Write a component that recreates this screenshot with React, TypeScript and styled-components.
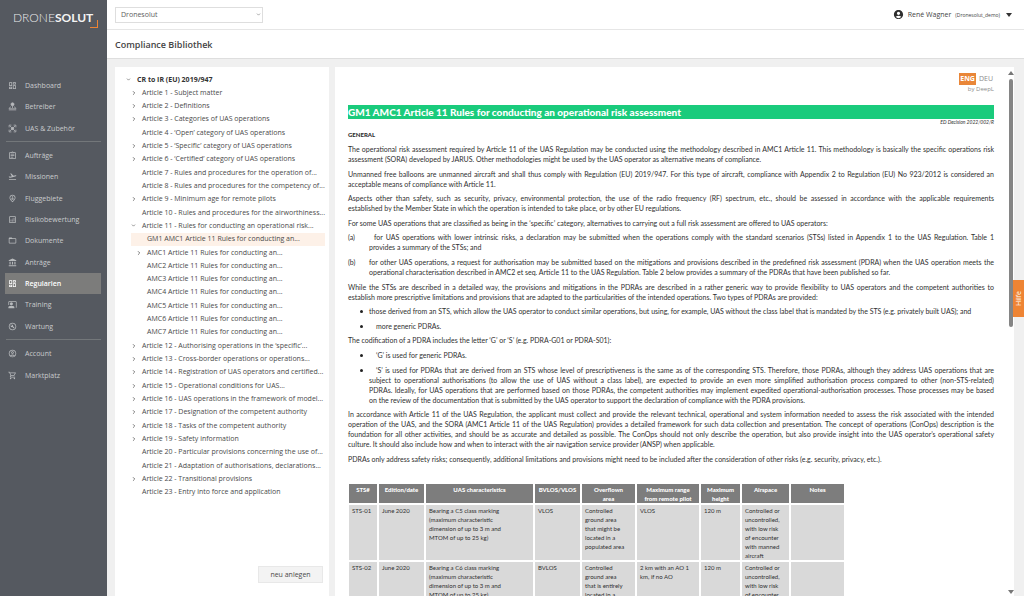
import React from "react";
import styled, { createGlobalStyle } from "styled-components";
import {
  MdOutlineDashboard,
  MdOutlineAssignment,
  MdFlightTakeoff,
  MdOutlinePersonPinCircle,
  MdOutlineAnalytics,
  MdFolderOpen,
  MdAccountBalance,
  MdCoPresent,
  MdOutlineBuildCircle,
  MdOutlineAccountCircle,
  MdAccountCircle,
  MdOutlineShoppingCart,
} from "react-icons/md";
import { ChevronDown, ChevronRight } from "lucide-react";

const Global = createGlobalStyle`
  *, *::before, *::after { box-sizing: border-box; }
  body { margin: 0; background: #f0f0f0; font-family: "Open Sans", "Noto Sans", sans-serif; }
  button, select { font: inherit; color: inherit; }
`;

const Shell = styled.div`
  display: grid;
  grid-template-columns: 107px minmax(0, 1fr);
  height: 100vh;
  overflow: hidden;
  position: relative;
`;

const Sidebar = styled.aside`
  background: #555960;
  color: #d3d5d7;
  padding: 11px 5px 0;
`;

const Logo = styled.a`
  display: flex;
  align-items: flex-start;
  height: 64px;
  padding-left: 8px;
  color: #e9eaeb;
  text-decoration: none;
  font-family: Lato, "Open Sans", sans-serif;
  font-size: 12px;
  line-height: 14px;
  font-weight: 300;
  b { font-weight: 700; color: #f4f4f4; }
`;

const LogoCorner = styled.span`
  flex: none;
  width: 8px;
  height: 8px;
  margin: 9px 0 0 -3px;
  border-right: 1px solid #ee8434;
  border-bottom: 1px solid #ee8434;
`;

const NavGroup = styled.ul<{ $height: number }>`
  display: grid;
  grid-auto-rows: 1fr;
  min-height: ${(p) => p.$height}px;
  margin: 0;
  padding: 0;
  list-style: none;
`;

const NavLink = styled.a<{ $active?: boolean }>`
  display: grid;
  grid-template-columns: 17px 1fr;
  align-items: center;
  height: 100%;
  padding-left: 3px;
  color: ${(p) => (p.$active ? "#ffffff" : "#c9cbcd")};
  background: ${(p) => (p.$active ? "#7c7c7b" : "transparent")};
  font-size: 7px;
  font-weight: ${(p) => (p.$active ? 600 : 500)};
  text-decoration: none;
  margin-right: 1px;
  svg { width: 9px; height: 9px; opacity: ${(p) => (p.$active ? 1 : 0.85)}; }
`;

const Rule = styled.hr`
  height: 1px;
  margin: 2px 1px 3px;
  border: 0;
  background: #73777a;
`;

const Main = styled.main`
  display: flex;
  flex-direction: column;
  min-width: 0;
  min-height: 0;
`;

const TopBar = styled.header`
  display: flex;
  align-items: center;
  justify-content: space-between;
  height: 30px;
  flex: none;
  padding: 0 12px 0 8px;
  background: #fff;
  border-bottom: 1px solid #e6e6e6;
`;

const SelectWrap = styled.label`
  display: flex;
  align-items: center;
  width: 148px;
  height: 16px;
  padding-right: 1px;
  border: 1px solid #dedede;
  color: #777;
`;

const CompanySelect = styled.select`
  flex: 1;
  height: 14px;
  padding: 0 5px;
  border: 0;
  outline: 0;
  appearance: none;
  background: transparent;
  color: #5c5c5c;
  font-size: 7px;
`;

const UserMenu = styled.button`
  display: flex;
  align-items: center;
  gap: 4px;
  padding: 0;
  border: 0;
  background: none;
  color: #444;
  font-size: 7px;
  svg { color: #2e2e2e; }
  small { font-size: 5px; }
`;

const Caret = styled.span`
  margin-left: 2px;
  border: 3px solid transparent;
  border-top: 4px solid #333;
  border-bottom: 0;
`;

const TitleBar = styled.div`
  display: flex;
  align-items: center;
  flex: none;
  height: 29px;
  padding: 0 8px;
  background: #fff;
  border-bottom: 1px solid #dedede;
`;

const Title = styled.h1`
  margin: 0;
  color: #444;
  font-size: 9px;
  font-weight: 600;
`;

const Panels = styled.div`
  display: grid;
  grid-template-columns: 214px minmax(0, 1fr);
  gap: 6px;
  flex: 1;
  min-height: 0;
  padding: 8px 10px 0 8px;
`;

const TreePanel = styled.section`
  display: flex;
  flex-direction: column;
  min-height: 0;
  padding: 5px 6px 13px 11px;
  background: #fff;
`;

const TreeRoot = styled.button`
  display: grid;
  grid-template-columns: 11px 1fr;
  align-items: center;
  height: 14px;
  flex: none;
  padding: 0;
  border: 0;
  background: none;
  color: #333;
  font-size: 7px;
  font-weight: 700;
  text-align: left;
  svg { color: #555; }
`;

const TreeList = styled.ul`
  display: grid;
  grid-auto-rows: 1fr;
  min-height: 413px;
  margin: 0 0 0 5px;
  padding: 0;
  list-style: none;
`;

const TreeItem = styled.button<{ $nested?: boolean; $active?: boolean }>`
  display: grid;
  grid-template-columns: 11px 1fr;
  align-items: center;
  width: 100%;
  height: 100%;
  padding: 0 0 0 ${(p) => (p.$nested ? 5 : 0)}px;
  border: 0;
  background: ${(p) => (p.$active ? "#fdf1e8" : "transparent")};
  color: #4a4a4a;
  font-size: 7px;
  line-height: 10px;
  text-align: left;
  white-space: nowrap;
  svg { color: #555; }
`;

const AddButton = styled.button`
  align-self: flex-end;
  width: 65px;
  height: 17px;
  margin-top: auto;
  border: 1px solid #e8e8e8;
  background: #f3f3f3;
  color: #4a4a4a;
  font-size: 7px;
`;

const DocPanel = styled.section`
  display: grid;
  grid-template-columns: minmax(0, 1fr) 6px;
  min-height: 0;
  background: #fff;
`;

const Doc = styled.article`
  display: flex;
  flex-direction: column;
  min-width: 0;
  overflow: hidden;
  padding: 6px 14px 0 13px;
  color: #303030;
  font-family: Lato, "Open Sans", sans-serif;
  font-size: 7px;
  line-height: 10px;
`;

const Languages = styled.div`
  display: flex;
  justify-content: flex-end;
  gap: 2px;
`;

const Language = styled.button<{ $active?: boolean }>`
  height: 12px;
  padding: 0 1px;
  border: 0;
  background: ${(p) => (p.$active ? "#e98638" : "transparent")};
  color: ${(p) => (p.$active ? "#fff" : "#8c8c8c")};
  font-family: "Open Sans", sans-serif;
  font-size: 7px;
  font-weight: ${(p) => (p.$active ? 700 : 400)};
`;

const Translator = styled.div`
  color: #8c8c8c;
  font-family: "Open Sans", sans-serif;
  font-size: 6px;
  line-height: 8px;
  text-align: right;
`;

const DocTitle = styled.h2`
  flex: none;
  margin: 12px 0 0;
  background: #1acb7c;
  color: #fff;
  font-size: 10px;
  line-height: 14px;
  font-weight: 900;
`;

const Decision = styled.div`
  font-size: 5px;
  line-height: 7px;
  font-style: italic;
  text-align: right;
`;

const Section = styled.h3`
  margin: 4px 0;
  font-size: 6px;
  line-height: 10px;
  font-weight: 900;
`;

const DocBody = styled.div`
  display: flex;
  flex-direction: column;
  justify-content: space-between;
  flex: none;
  min-height: 320px;
`;

const Paragraph = styled.p`
  margin: 0;
`;

const Clause = styled.div`
  display: grid;
  grid-template-columns: 21px minmax(0, 1fr);
`;

const Line = styled.span<{ $justify?: boolean; $indent?: number }>`
  display: block;
  padding-left: ${(p) => p.$indent ?? 0}px;
  white-space: nowrap;
  text-align: justify;
  text-align-last: ${(p) => (p.$justify ? "justify" : "left")};
`;

const Bullets = styled.ul`
  display: contents;
  list-style: none;
`;

const Bullet = styled.li`
  display: grid;
  grid-template-columns: 9px minmax(0, 1fr);
  padding-left: 12px;
  &::before {
    content: "";
    width: 3px;
    height: 3px;
    margin-top: 4px;
    border-radius: 50%;
    background: #222;
  }
`;

const DataTable = styled.table`
  flex: none;
  width: 499px;
  margin: 18px 0 0 -1px;
  border-collapse: separate;
  border-spacing: 2px;
  table-layout: fixed;
  line-height: 9px;
  font-size: 6px;
  th {
    height: 19px;
    padding: 1px 2px 0;
    background: #7d7d7d;
    color: #fff;
    font-weight: 900;
    vertical-align: top;
    text-align: center;
    white-space: pre-line;
  }
  td {
    height: 55px;
    padding: 1px 3px 0;
    background: #d9d9d9;
    vertical-align: top;
    white-space: pre-line;
  }
`;

const ScrollTrack = styled.div`
  display: flex;
  flex-direction: column;
  align-items: center;
  min-height: 0;
  padding: 4px 0 2px;
  color: #777;
`;

const ScrollThumb = styled.div`
  width: 4px;
  height: 248px;
  margin: 4px 0 auto;
  border-radius: 2px;
  background: #858585;
`;

const ScrollArrow = styled.span<{ $up?: boolean }>`
  border: 3px solid transparent;
  border-top: ${(p) => (p.$up ? "0" : "4px solid #777")};
  border-bottom: ${(p) => (p.$up ? "4px solid #777" : "0")};
`;

const HelpTab = styled.button`
  position: absolute;
  right: 0;
  top: 280px;
  width: 11px;
  height: 37px;
  padding: 0;
  border: 0;
  background: #ee8434;
  color: #fff;
  font-size: 7px;
  line-height: 11px;
  writing-mode: vertical-rl;
  rotate: 180deg;
`;

const OperatorIcon = () => (
  <svg viewBox="0 0 24 24" fill="none" stroke="currentColor" strokeWidth="2">
    <circle cx="12" cy="6" r="4" fill="currentColor" />
    <path d="M12 10v6M8 13c-3 1-5 2-5 5h18c0-3-2-4-5-5M2 21h20" />
  </svg>
);

const DroneIcon = () => (
  <svg viewBox="0 0 24 24" fill="none" stroke="currentColor" strokeWidth="2">
    <path d="M9 9h6v6H9z" fill="currentColor" />
    <path d="M9 9 5 5M15 9l4-4M9 15l-4 4M15 15l4 4" />
    <path d="M3 9V3h6M15 3h6v6M21 15v6h-6M9 21H3v-6" />
  </svg>
);

type NavEntry = { label: string; Icon: React.ComponentType; active?: boolean };

const navGroups: { height: number; items: NavEntry[] }[] = [
  {
    height: 64,
    items: [
      { label: "Dashboard", Icon: MdOutlineDashboard },
      { label: "Betreiber", Icon: OperatorIcon },
      { label: "UAS & Zubehör", Icon: DroneIcon },
    ],
  },
  {
    height: 192,
    items: [
      { label: "Aufträge", Icon: MdOutlineAssignment },
      { label: "Missionen", Icon: MdFlightTakeoff },
      { label: "Fluggebiete", Icon: MdOutlinePersonPinCircle },
      { label: "Risikobewertung", Icon: MdOutlineAnalytics },
      { label: "Dokumente", Icon: MdFolderOpen },
      { label: "Anträge", Icon: MdAccountBalance },
      { label: "Regularien", Icon: MdOutlineDashboard, active: true },
      { label: "Training", Icon: MdCoPresent },
      { label: "Wartung", Icon: MdOutlineBuildCircle },
    ],
  },
  {
    height: 43,
    items: [
      { label: "Account", Icon: MdOutlineAccountCircle },
      { label: "Marktplatz", Icon: MdOutlineShoppingCart },
    ],
  },
];

type Mark = "closed" | "open" | "none";
const tree: { label: string; mark: Mark; nested?: boolean; active?: boolean }[] = [
  { label: "Article 1 - Subject matter", mark: "closed" },
  { label: "Article 2 - Definitions", mark: "closed" },
  { label: "Article 3 - Categories of UAS operations", mark: "closed" },
  { label: "Article 4 - ‘Open’ category of UAS operations", mark: "none" },
  { label: "Article 5 - ‘Specific’ category of UAS operations", mark: "closed" },
  { label: "Article 6 - ‘Certified’ category of UAS operations", mark: "closed" },
  { label: "Article 7 - Rules and procedures for the operation of...", mark: "none" },
  { label: "Article 8 - Rules and procedures for the competency of...", mark: "none" },
  { label: "Article 9 - Minimum age for remote pilots", mark: "closed" },
  { label: "Article 10 - Rules and procedures for the airworthiness...", mark: "none" },
  { label: "Article 11 - Rules for conducting an operational risk...", mark: "open" },
  { label: "GM1 AMC1 Article 11 Rules for conducting an...", mark: "none", nested: true, active: true },
  { label: "AMC1 Article 11 Rules for conducting an...", mark: "closed", nested: true },
  { label: "AMC2 Article 11 Rules for conducting an...", mark: "none", nested: true },
  { label: "AMC3 Article 11 Rules for conducting an...", mark: "none", nested: true },
  { label: "AMC4 Article 11 Rules for conducting an...", mark: "none", nested: true },
  { label: "AMC5 Article 11 Rules for conducting an...", mark: "none", nested: true },
  { label: "AMC6 Article 11 Rules for conducting an...", mark: "none", nested: true },
  { label: "AMC7 Article 11 Rules for conducting an...", mark: "none", nested: true },
  { label: "Article 12 - Authorising operations in the ‘specific’...", mark: "closed" },
  { label: "Article 13 - Cross-border operations or operations...", mark: "closed" },
  { label: "Article 14 - Registration of UAS operators and certified...", mark: "closed" },
  { label: "Article 15 - Operational conditions for UAS...", mark: "closed" },
  { label: "Article 16 - UAS operations in the framework of model...", mark: "closed" },
  { label: "Article 17 - Designation of the competent authority", mark: "closed" },
  { label: "Article 18 - Tasks of the competent authority", mark: "closed" },
  { label: "Article 19 - Safety information", mark: "closed" },
  { label: "Article 20 - Particular provisions concerning the use of...", mark: "none" },
  { label: "Article 21 - Adaptation of authorisations, declarations...", mark: "none" },
  { label: "Article 22 - Transitional provisions", mark: "closed" },
  { label: "Article 23 - Entry into force and application", mark: "none" },
];

const columns: [string, number][] = [
  ["STS#", 28],
  ["Edition/date", 45],
  ["UAS characteristics", 107],
  ["BVLOS/VLOS", 45],
  ["Overflown\narea", 53],
  ["Maximum range\nfrom remote pilot", 62],
  ["Maximum\nheight", 39],
  ["Airspace", 47],
  ["Notes", 53],
];

const rows = [
  [
    "STS-01",
    "June 2020",
    "Bearing a C5 class marking\n(maximum characteristic\ndimension of up to 3 m and\nMTOM of up to 25 kg)",
    "VLOS",
    "Controlled\nground area\nthat might be\nlocated in a\npopulated area",
    "VLOS",
    "120 m",
    "Controlled or\nuncontrolled,\nwith low risk\nof encounter\nwith manned\naircraft",
    "",
  ],
  [
    "STS-02",
    "June 2020",
    "Bearing a C6 class marking\n(maximum characteristic\ndimension of up to 3 m and\nMTOM of up to 25 kg)",
    "BVLOS",
    "Controlled\nground area\nthat is entirely\nlocated in a",
    "2 km with an AO 1\nkm, if no AO",
    "120 m",
    "Controlled or\nuncontrolled,\nwith low risk\nof encounter",
    "",
  ],
];

const Lines = ({ lines, indent }: { lines: string[]; indent?: number }) => (
  <>
    {lines.map((text, i) => (
      <Line key={text} $justify={i < lines.length - 1} $indent={i === 0 ? indent : 0}>
        {text}{" "}
      </Line>
    ))}
  </>
);

export default function App() {
  return (
    <Shell>
      <Global />
      <Sidebar>
        <Logo href="#">
          <span>DRONE<b>SOLUT</b></span>
          <LogoCorner />
        </Logo>
        <nav>
          {navGroups.map((group, i) => (
            <React.Fragment key={group.height}>
              {i > 0 && <Rule />}
              <NavGroup $height={group.height}>
                {group.items.map(({ label, Icon, active }) => (
                  <li key={label}>
                    <NavLink href="#" $active={active}>
                      <Icon />
                      {label}
                    </NavLink>
                  </li>
                ))}
              </NavGroup>
            </React.Fragment>
          ))}
        </nav>
      </Sidebar>
      <Main>
        <TopBar>
          <SelectWrap>
            <CompanySelect aria-label="Dronesolut">
              <option>Dronesolut</option>
            </CompanySelect>
            <ChevronDown size={5} strokeWidth={3} />
          </SelectWrap>
          <UserMenu>
            <MdAccountCircle size={11} />
            René Wagner <small>(Dronesolut_demo)</small>
            <Caret />
          </UserMenu>
        </TopBar>
        <TitleBar>
          <Title>Compliance Bibliothek</Title>
        </TitleBar>
        <Panels>
          <TreePanel>
            <TreeRoot>
              <ChevronDown size={5} strokeWidth={3} />
              CR to IR (EU) 2019/947
            </TreeRoot>
            <TreeList>
              {tree.map(({ label, mark, nested, active }) => (
                <li key={label}>
                  <TreeItem $nested={nested} $active={active}>
                    {mark === "closed" ? (
                      <ChevronRight size={6} strokeWidth={3} />
                    ) : mark === "open" ? (
                      <ChevronDown size={5} strokeWidth={3} />
                    ) : (
                      <span />
                    )}
                    {label}
                  </TreeItem>
                </li>
              ))}
            </TreeList>
            <AddButton>neu anlegen</AddButton>
          </TreePanel>
          <DocPanel>
            <Doc>
              <Languages>
                <Language $active>ENG</Language>
                <Language>DEU</Language>
              </Languages>
              <Translator>by DeepL</Translator>
              <DocTitle>GM1 AMC1 Article 11 Rules for conducting an operational risk assessment</DocTitle>
              <Decision>ED Decision 2022/002/R</Decision>
              <Section>GENERAL</Section>
              <DocBody>
                <Paragraph>
                  <Lines
                    lines={[
                      "The operational risk assessment required by Article 11 of the UAS Regulation may be conducted using the methodology described in AMC1 Article 11. This methodology is basically the specific operations risk",
                      "assessment (SORA) developed by JARUS. Other methodologies might be used by the UAS operator as alternative means of compliance.",
                    ]}
                  />
                </Paragraph>
                <Paragraph>
                  <Lines
                    lines={[
                      "Unmanned free balloons are unmanned aircraft and shall thus comply with Regulation (EU) 2019/947. For this type of aircraft, compliance with Appendix 2 to Regulation (EU) No 923/2012 is considered an",
                      "acceptable means of compliance with Article 11.",
                    ]}
                  />
                </Paragraph>
                <Paragraph>
                  <Lines
                    lines={[
                      "Aspects other than safety, such as security, privacy, environmental protection, the use of the radio frequency (RF) spectrum, etc., should be assessed in accordance with the applicable requirements",
                      "established by the Member State in which the operation is intended to take place, or by other EU regulations.",
                    ]}
                  />
                </Paragraph>
                <Paragraph>
                  <Lines
                    lines={[
                      "For some UAS operations that are classified as being in the ‘specific’ category, alternatives to carrying out a full risk assessment are offered to UAS operators:",
                    ]}
                  />
                </Paragraph>
                <Clause>
                  <span>(a)</span>
                  <div>
                    <Lines
                      indent={5}
                      lines={[
                        "for UAS operations with lower intrinsic risks, a declaration may be submitted when the operations comply with the standard scenarios (STSs) listed in Appendix 1 to the UAS Regulation. Table 1",
                        "provides a summary of the STSs; and",
                      ]}
                    />
                  </div>
                </Clause>
                <Clause>
                  <span>(b)</span>
                  <div>
                    <Lines
                      lines={[
                        "for other UAS operations, a request for authorisation may be submitted based on the mitigations and provisions described in the predefined risk assessment (PDRA) when the UAS operation meets the",
                        "operational characterisation described in AMC2 et seq. Article 11 to the UAS Regulation. Table 2 below provides a summary of the PDRAs that have been published so far.",
                      ]}
                    />
                  </div>
                </Clause>
                <Paragraph>
                  <Lines
                    lines={[
                      "While the STSs are described in a detailed way, the provisions and mitigations in the PDRAs are described in a rather generic way to provide flexibility to UAS operators and the competent authorities to",
                      "establish more prescriptive limitations and provisions that are adapted to the particularities of the intended operations. Two types of PDRAs are provided:",
                    ]}
                  />
                </Paragraph>
                <Bullets>
                  <Bullet>
                    <Lines
                      lines={[
                        "those derived from an STS, which allow the UAS operator to conduct similar operations, but using, for example, UAS without the class label that is mandated by the STS (e.g. privately built UAS); and",
                      ]}
                    />
                  </Bullet>
                  <Bullet>
                    <Lines indent={7} lines={["more generic PDRAs."]} />
                  </Bullet>
                </Bullets>
                <Paragraph>
                  <Lines lines={["The codification of a PDRA includes the letter ‘G’ or ‘S’ (e.g. PDRA-G01 or PDRA-S01):"]} />
                </Paragraph>
                <Bullets>
                  <Bullet>
                    <Lines indent={7} lines={["‘G’ is used for generic PDRAs."]} />
                  </Bullet>
                  <Bullet>
                    <div>
                      <Lines
                        indent={7}
                        lines={[
                          "‘S’ is used for PDRAs that are derived from an STS whose level of prescriptiveness is the same as of the corresponding STS. Therefore, those PDRAs, although they address UAS operations that are",
                          "subject to operational authorisations (to allow the use of UAS without a class label), are expected to provide an even more simplified authorisation process compared to other (non-STS-related)",
                          "PDRAs. Ideally, for UAS operations that are performed based on those PDRAs, the competent authorities may implement expedited operational-authorisation processes. Those processes may be based",
                          "on the review of the documentation that is submitted by the UAS operator to support the declaration of compliance with the PDRA provisions.",
                        ]}
                      />
                    </div>
                  </Bullet>
                </Bullets>
                <Paragraph>
                  <Lines
                    lines={[
                      "In accordance with Article 11 of the UAS Regulation, the applicant must collect and provide the relevant technical, operational and system information needed to assess the risk associated with the intended",
                      "operation of the UAS, and the SORA (AMC1 Article 11 of the UAS Regulation) provides a detailed framework for such data collection and presentation. The concept of operations (ConOps) description is the",
                      "foundation for all other activities, and should be as accurate and detailed as possible. The ConOps should not only describe the operation, but also provide insight into the UAS operator’s operational safety",
                      "culture. It should also include how and when to interact with the air navigation service provider (ANSP) when applicable.",
                    ]}
                  />
                </Paragraph>
                <Paragraph>
                  <Lines
                    lines={[
                      "PDRAs only address safety risks; consequently, additional limitations and provisions might need to be included after the consideration of other risks (e.g. security, privacy, etc.).",
                    ]}
                  />
                </Paragraph>
              </DocBody>
              <DataTable>
                <colgroup>
                  {columns.map(([name, width]) => (
                    <col key={name} width={width} />
                  ))}
                </colgroup>
                <thead>
                  <tr>
                    {columns.map(([name]) => (
                      <th key={name} scope="col">{name}</th>
                    ))}
                  </tr>
                </thead>
                <tbody>
                  {rows.map((cells) => (
                    <tr key={cells[0]}>
                      {cells.map((cell, i) => (
                        <td key={i}>{cell}</td>
                      ))}
                    </tr>
                  ))}
                </tbody>
              </DataTable>
            </Doc>
            <ScrollTrack aria-hidden="true">
              <ScrollArrow $up />
              <ScrollThumb />
              <ScrollArrow />
            </ScrollTrack>
          </DocPanel>
        </Panels>
      </Main>
      <HelpTab>Hilfe</HelpTab>
    </Shell>
  );
}
